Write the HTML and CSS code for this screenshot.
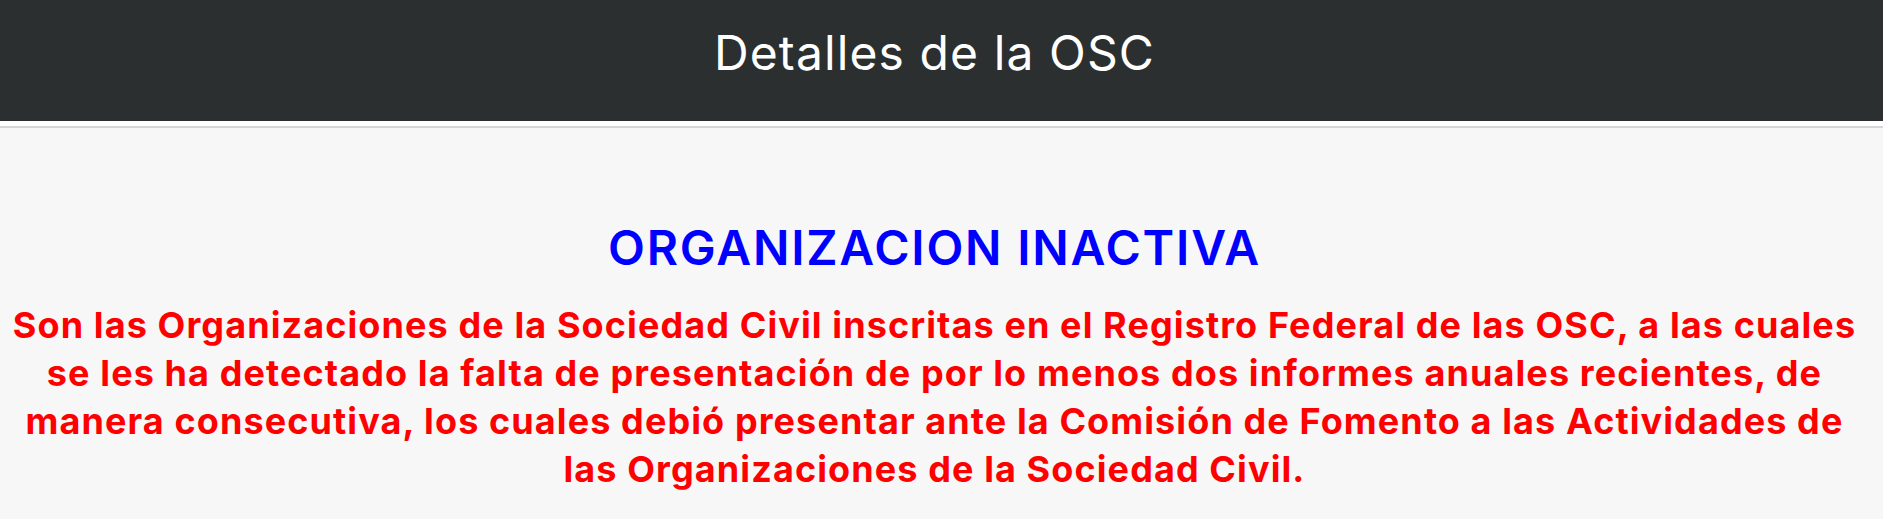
FILE: index.html
```html
<!DOCTYPE html>
<html lang="es">
<head>
<meta charset="utf-8">
<title>Detalles de la OSC</title>
<link rel="stylesheet" href="styles.css">
</head>
<body>
<header class="topbar">
  <h1 class="topbar-title">Detalles de la OSC</h1>
</header>
<div class="divider"></div>
<main class="content">
  <h2 class="status">ORGANIZACION INACTIVA</h2>
  <p class="status-desc">Son las Organizaciones de la Sociedad Civil inscritas en el Registro Federal de las OSC, a las cuales se les ha detectado la falta de presentación de por lo menos dos informes anuales recientes, de manera consecutiva, los cuales debió presentar ante la Comisión de Fomento a las Actividades de las Organizaciones de la Sociedad Civil.</p>
</main>
</body>
</html>
```
FILE: styles.css
```css
html, body {
  margin: 0;
  padding: 0;
  background: #f7f7f7;
  font-family: Inter, "Open Sans", sans-serif;
}
.topbar {
  box-sizing: border-box;
  height: 121px;
  background: #2b2f30;
  padding: 24px 14px 0 0;
}
.topbar-title {
  margin: 0;
  text-align: center;
  color: #ffffff;
  font-size: 48px;
  line-height: 58px;
  font-weight: 400;
  letter-spacing: 1.1px;
}
.divider {
  height: 5px;
  background: #ffffff;
  border-bottom: 2px solid #d6d6d6;
}
.content {
  padding: 91px 26px 0 12px;
  text-align: center;
}
.status {
  margin: 0;
  color: #0000ff;
  font-size: 48px;
  line-height: 58px;
  font-weight: 600;
  letter-spacing: 1.8px;
}
.status-desc {
  margin: 24px 0 0;
  color: #ff0000;
  font-size: 36px;
  line-height: 48px;
  font-weight: 700;
  letter-spacing: 1.1px;
}
```
